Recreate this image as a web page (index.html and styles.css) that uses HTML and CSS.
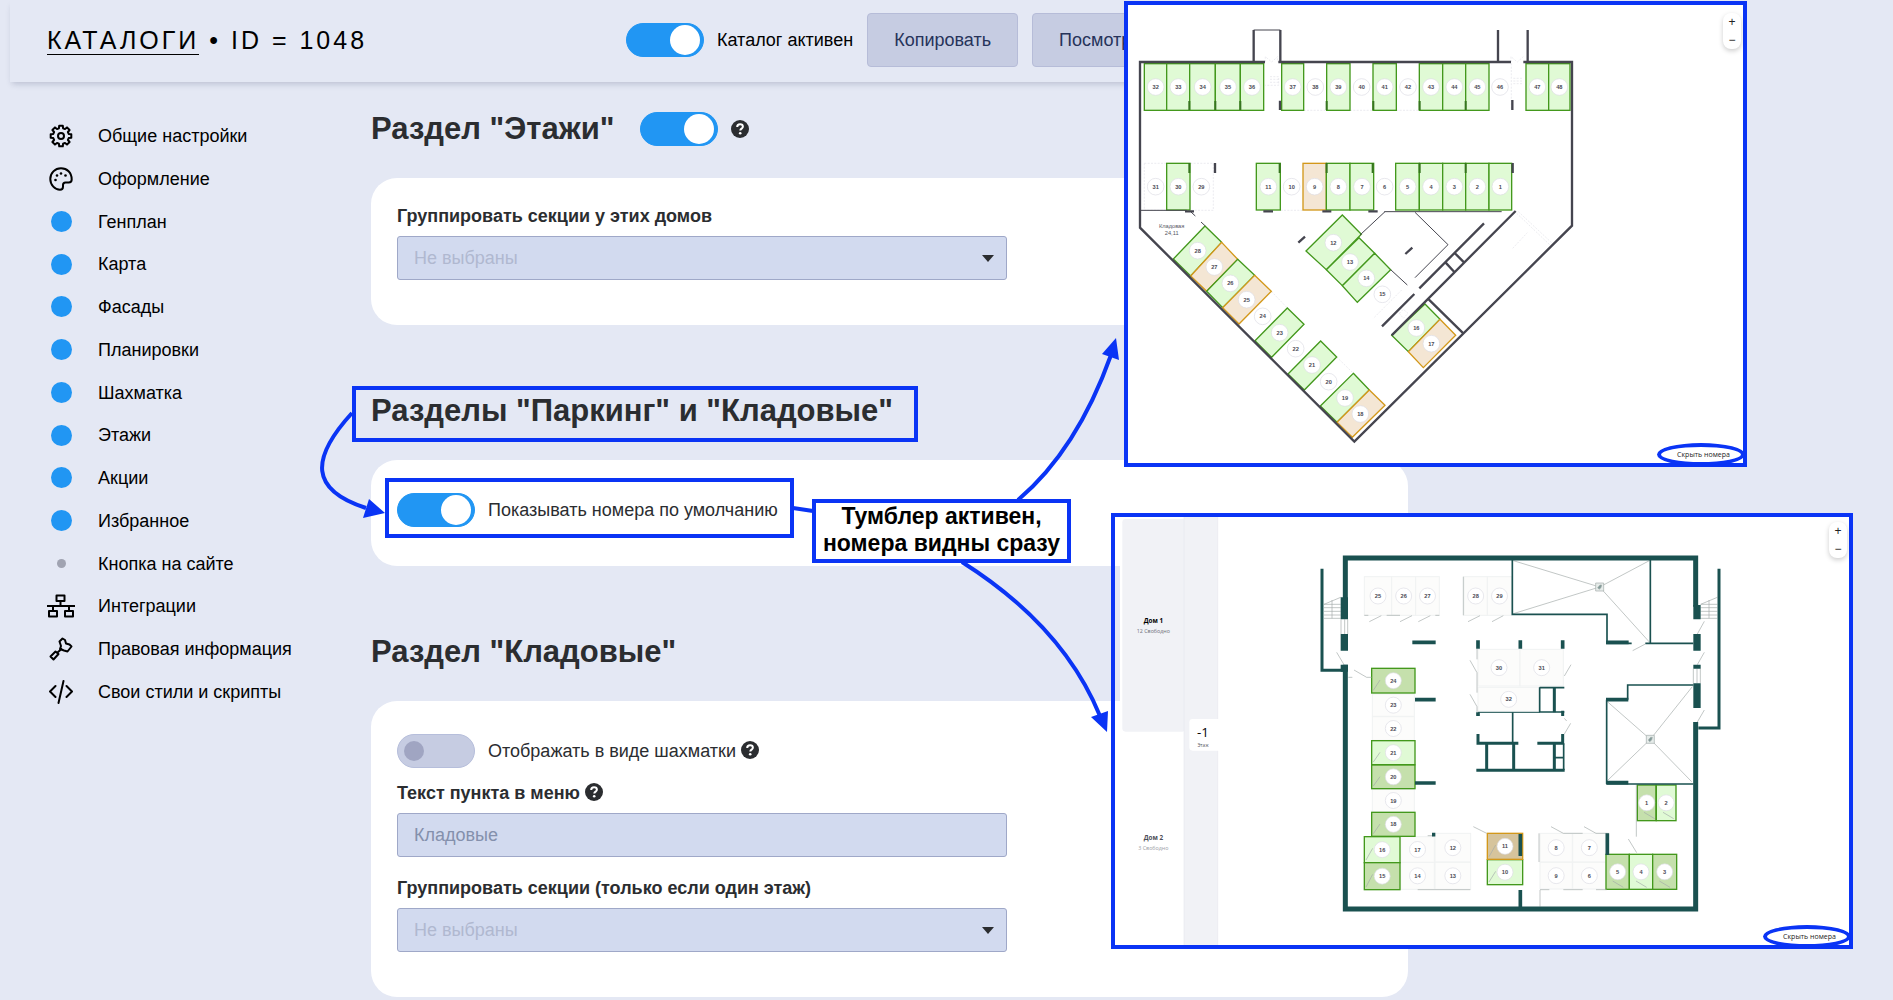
FILE: index.html
```html
<!DOCTYPE html>
<html lang="ru">
<head>
  <meta charset="UTF-8">
  <meta name="viewport" content="width=device-width, initial-scale=1.0">
  <title>Каталоги • ID = 1048</title>
  <link rel="stylesheet" href="styles.css">
</head>
<body>

  <svg class="sprite" aria-hidden="true">
    <symbol id="help" viewBox="0 0 18 18">
      <circle cx="9" cy="9" r="9" fill="#2b2d30"/>
      <path d="M6.2 7c0-3.6 5.7-3.4 5.7-.2 0 1.8-2.6 1.9-2.6 3.7" fill="none" stroke="#fff" stroke-width="2"/>
      <circle cx="9.2" cy="13.3" r="1.3" fill="#fff"/>
    </symbol>
  </svg>

  <header class="topbar">
    <div class="brand"><a href="#">КАТАЛОГИ</a> • ID = 1048</div>
    <div class="actions">
      <label class="switch-row"><input type="checkbox" class="switch" checked> Каталог активен</label>
      <button class="btn">Копировать</button>
      <button class="btn">Посмотреть</button>
    </div>
  </header>

  <div class="layout">
    <nav class="sidebar">
      <a href="#"><span class="icon"><svg viewBox="0 0 24 24"><path d="M9.9 4.3 10.2 1.7H13.8L14.1 4.3 16 5.1 18 3.4 20.6 6 18.9 8 19.7 9.9 22.3 10.2V13.8L19.7 14.1 18.9 16 20.6 18 18 20.6 16 18.9 14.1 19.7 13.8 22.3H10.2L9.9 19.7 8 18.9 6 20.6 3.4 18 5.1 16 4.3 14.1 1.7 13.8V10.2L4.3 9.9 5.1 8 3.4 6 6 3.4 8 5.1Z"/><circle cx="12" cy="12" r="3"/></svg></span>Общие настройки</a>
      <a href="#"><span class="icon"><svg viewBox="0 0 24 24"><path d="M12 1.3C6 1.3 1.3 6 1.3 12c0 6 4.7 10.7 9.7 10.7 2 0 3-1.2 3-3v-1.7c0-1.5 1-2.5 2.5-2.5h3.2c2 0 3-1.2 3-3C22.7 5.5 18 1.3 12 1.3z"/><g class="dots"><circle cx="6.5" cy="13" r="1.3"/><circle cx="8" cy="8.5" r="1.3"/><circle cx="12" cy="6.5" r="1.3"/><circle cx="16.5" cy="8.5" r="1.3"/></g></svg></span>Оформление</a>
      <a href="#"><span class="icon"><i class="dot"></i></span>Генплан</a>
      <a href="#"><span class="icon"><i class="dot"></i></span>Карта</a>
      <a href="#"><span class="icon"><i class="dot"></i></span>Фасады</a>
      <a href="#"><span class="icon"><i class="dot"></i></span>Планировки</a>
      <a href="#"><span class="icon"><i class="dot"></i></span>Шахматка</a>
      <a href="#"><span class="icon"><i class="dot"></i></span>Этажи</a>
      <a href="#"><span class="icon"><i class="dot"></i></span>Акции</a>
      <a href="#"><span class="icon"><i class="dot"></i></span>Избранное</a>
      <a href="#"><span class="icon"><i class="dot off"></i></span>Кнопка на сайте</a>
      <a href="#"><span class="icon wide"><svg viewBox="0 0 28 24"><path d="M9.5 1.5h8v5.5h-8zM2 17h8v5.5H2zM18 17h8v5.5h-8zM13.5 7v5M0 12h28M6 12v5M22 12v5"/></svg></span>Интеграции</a>
      <a href="#"><span class="icon"><svg viewBox="0 0 24 24"><path d="M13.5 1.5 10.5 4.500 12 9 11 12 15 13.500 18.500 14.500 22.500 9.500 20.500 7.500 17 6.500 16 3ZM12.500 12 8.500 15.500M6.500 14.500 9.500 17 4.500 22.500 1.500 19.500Z"/></svg></span>Правовая информация</a>
      <a href="#"><span class="icon"><svg viewBox="0 0 24 24"><path d="M6.5 6 1 11.5 6.5 17M17.5 6 23 11.5 17.5 17M14.5 1 9.5 23"/></svg></span>Свои стили и скрипты</a>
    </nav>

    <main>
      <section>
        <div class="title">
          <h2>Раздел "Этажи"</h2>
          <input type="checkbox" class="switch" aria-label="Раздел Этажи" checked>
          <svg class="help"><use href="#help"/></svg>
        </div>
        <div class="card">
          <div class="field">
            <label for="floorGroup">Группировать секции у этих домов</label>
            <div class="select"><select id="floorGroup"><option>Не выбраны</option></select></div>
          </div>
        </div>
      </section>

      <section>
        <div class="title"><h2>Разделы "Паркинг" и "Кладовые"</h2></div>
        <div class="card">
          <label class="switch-row"><input type="checkbox" class="switch" checked> Показывать номера по умолчанию</label>
        </div>
      </section>

      <section>
        <div class="title"><h2>Раздел "Кладовые"</h2></div>
        <div class="card">
          <label class="switch-row"><input type="checkbox" class="switch"> <span>Отображать в виде шахматки <svg class="help"><use href="#help"/></svg></span></label>
          <div class="field">
            <label for="menuText">Текст пункта в меню <svg class="help"><use href="#help"/></svg></label>
            <input type="text" id="menuText" placeholder="Кладовые">
          </div>
          <div class="field">
            <label for="storeGroup">Группировать секции (только если один этаж)</label>
            <div class="select"><select id="storeGroup"><option>Не выбраны</option></select></div>
          </div>
        </div>
      </section>
    </main>
  </div>

  <!-- план паркинга -->
  <figure class="shot parking">
    <svg class="plan" viewBox="24 15 1845 1374">
      <rect x="24" y="15" width="1845" height="1374" fill="#fff"/>
      <g class="faint">
        <path d="M73 490H140V631H73ZM211 490H280V631H211M551 331H620M690 331H759M829 331H898M482 631H548M454 874 502 924M650 1071 700 1120M845 870 760 955M1190 640 1290 735M1195 635 1297 730M1178 745 1222 698M436 186V170L455 186 473 170V186M450 230H476V256H436M450 238H476M450 247H476M1173 186V170L1192 186 1210 170M1174 190V330M1180 235H1207M1180 243H1207M1180 251H1207M838 940 850 928 864 940 850 955Z"/>
      </g>
      <g id="parkingSpots"></g>
      <g class="wall">
        <path class="w7" d="M435 186H60V683L703 1325 1356 677V186H1210M475 186H1173M401 186V90M481 186V90M1134 90V186M1223 90V186"/>
        <path class="w7" d="M1092 670 898 865M1187 633 815 1006M883 882 786 979M1004 759 1032 787M977 788 1003 816M926 898 1030 1000M535 728 555 710M856 762 877 743"/>
        <path class="w7" d="M480 302V330M1177 300V330M285 489V519M1178 489V519M195 634H222M430 634H459M607 634H634M745 634H773"/>
        <path class="w3" d="M401 90H481M60 631H200M793 635H1145M720 705 795 635M885 637 984 734 885 833M812 809 862 855M213 636 226 648M243 666 256 678"/>
        <path class="col" d="M208 303V330M286 303V330M361 303V330M620 303V330M760 303V330M899 303V330M1037 303V330M208 489V519M479 489V519M620 489V519M758 489V519M899 489V519M1037 489V519"/>
      </g>
      <text class="room" x="155" y="684">Кладовая</text>
      <text class="room" x="155" y="705">24,11</text>
    </svg>
    <div class="zoom"><button aria-label="Приблизить">+</button><button aria-label="Отдалить">−</button></div>
    <button class="hide">Скрыть номера</button>
  </figure>

  <!-- план кладовых -->
  <figure class="shot storage">
    <svg class="plan" viewBox="45 21 2202 1284">
      <rect x="60" y="21" width="2187" height="1284" fill="#fff"/>
      <rect x="67" y="27" width="190" height="638" rx="10" fill="#f1f2f6"/>
      <rect x="252" y="21" width="101" height="1284" fill="#f1f2f6"/>
      <path d="M252 21V1305M353 21V1305" stroke="#e7e8ee" stroke-width="2"/>
      <rect x="268" y="627" width="100" height="95" rx="10" fill="#fff"/>
      <g class="house">
        <text x="160" y="338" font-size="19" font-weight="bold">Дом 1</text>
        <text x="160" y="368" font-size="16" fill="#6d6f78">12 Свободно</text>
        <text x="160" y="991" font-size="19" font-weight="bold" fill="#4a4c55">Дом 2</text>
        <text x="160" y="1021" font-size="16" fill="#9a9ca5">3 Свободно</text>
        <text x="309" y="680" font-size="40">-1</text>
        <text x="309" y="710" font-size="14" fill="#55575f">Этаж</text>
      </g>
      <g id="storageCells"></g>
      <!-- двери, лестницы, окна -->
      <path class="thin" d="M808 335 844 317M900 335 936 317M955 335 991 317M1104 335 1140 317M1176 335 1210 317M793 316H805M860 316H900M1006 316H1018M710 427 732 464M762 480 800 502H815M745 502H757M1110 451 1131 488V548M1131 416V448M1110 553 1131 590V607M1393 498 1413 464M1393 625 1400 633M1393 672 1412 640M1120 950 1160 970M1353 950 1390 970H1448M1452 950 1488 970H1526M1585 987 1610 1028M1598 422 1636 402M1792 372 1813 334M1792 464 1813 427M1792 636 1813 600M953 1139H1111M1320 1139H1348M1390 1139H1448M1488 1139H1520M1090 200V316M1317 970V1056M1320 1140V1190M1609 825V980M983 977H997M1240 152 1499 231 1240 311M1648 152 1499 231 1648 396M1522 575 1651 688 1777 530M1522 812 1651 688 1775 815"/>
      <path class="thin" d="M672 283 722 262M672 283H722M672 293H722M672 304H722M672 315H722M672 325H722M696 270V325M1802 283 1852 262M1802 283H1852M1802 293H1852M1802 304H1852M1802 315H1852M1802 325H1852M1827 270V325M723 328V372M734 328V372M743 328V372M1780 476V520M1791 476V520M1801 476V520"/>
      <g class="thin"><path d="M1487 219H1511V243H1487ZM1639 676H1663V700H1639Z"/><path d="M1493 233 1500 225H1505L1503 233 1497 238ZM1645 690 1652 682H1657L1655 690 1649 695Z" fill="#7f9a98"/></g>
      <g class="teal">
        <path class="w15" d="M736 270V144H1787V290M736 464V1197H1787V636"/>
        <path class="w22" d="M733 262V328M733 372V422M733 464V485M1791 285V328M1791 372V422M1791 464V476M1791 520V594"/>
        <path class="w9" d="M666 176V481H730M1857 176V654H1795"/>
        <path class="w11" d="M937 397H1007M945 569H1007M945 819H1007M1134 391V416M1261 391V416M1388 391V416M1261 1140V1195M1261 972V1038M1522 970V1035M996 974H1006M1518 569H1585M1518 818H1585M1518 397H1586M1134 607V618"/>
        <path class="w9" d="M1363 533V607M1388 602V618M1134 672V700H1255M1312 700H1388V672M1129 781H1394M1160 700V780M1241 700V780M1363 700V780"/>
        <path class="w5" d="M1237 150V313H1521V400H1595M1636 400H1780M1651 150V400M1520 822V569M1583 569V525H1780M1520 822H1780M1319 532V607M1319 533H1393M1319 606H1393M1238 607V700M1391 700V780M1363 743H1391"/>
        <path class="w3" d="M1134 607H1320"/>
      </g>
      <g id="storageLabels"></g>
    </svg>
    <div class="zoom"><button aria-label="Приблизить">+</button><button aria-label="Отдалить">−</button></div>
    <button class="hide">Скрыть номера</button>
  </figure>

  <!-- рамки и стрелки -->
  <svg class="arrows" width="1200" height="800" aria-hidden="true">
    <g fill="none" stroke="#0a34f5" stroke-width="4">
      <rect x="354" y="388" width="562" height="52"/>
      <rect x="387" y="480" width="405" height="56"/>
      <path d="M352 413C310 459 310 490 366 508M793 508 813 511M1018 500Q1077 450 1111 355M962 562C1030 605 1075 655 1100 716"/>
    </g>
    <path fill="#0a34f5" d="M369 499 363 518 385 513ZM1102 354 1119 360 1116 338ZM1091 717 1108 711 1107 732Z"/>
  </svg>
  <div class="note">Тумблер активен,<br>номера видны сразу</div>

  <script>
    // [номер, x1, x2, статус] - ряды паркинга
    const topRow = [
      [32, 73, 140, 'free'], [33, 140, 209, 'free'], [34, 209, 286, 'free'], [35, 286, 361, 'free'], [36, 361, 431, 'free'],
      [37, 485, 551, 'free'], [38, 551, 620], [39, 620, 690, 'free'], [40, 690, 759], [41, 759, 829, 'free'], [42, 829, 898],
      [43, 898, 968, 'free'], [44, 968, 1037, 'free'], [45, 1037, 1107, 'free'], [46, 1107, 1173], [47, 1218, 1286, 'free'], [48, 1286, 1350, 'free']
    ];
    const midRow = [
      [31, 73, 140], [30, 140, 210, 'free'], [29, 210, 278], [11, 409, 481, 'free'], [10, 481, 549], [9, 549, 619, 'booked'],
      [8, 619, 690, 'free'], [7, 690, 761, 'free'], [6, 761, 827], [5, 827, 898, 'free'], [4, 898, 968, 'free'],
      [3, 968, 1037, 'free'], [2, 1037, 1107, 'free'], [1, 1107, 1175, 'free']
    ];
    // [номер, cx, cy, точки, статус] - наклонные места
    const diagonal = [
      [28, 233, 752, '255,678 305,727 212,828 160,777', 'free'],
      [27, 283, 801, '305,727 353,778 260,874 212,828', 'booked'],
      [26, 331, 850, '353,778 404,826 308,923 260,874', 'free'],
      [25, 380, 899, '404,826 454,874 357,972 308,923', 'booked'],
      [24, 428, 949],
      [23, 479, 998, '502,924 552,973 455,1072 405,1022', 'free'],
      [22, 527, 1046],
      [21, 576, 1095, '602,1023 650,1071 553,1170 504,1122', 'free'],
      [20, 626, 1145],
      [19, 675, 1194, '700,1120 748,1170 651,1267 601,1218', 'free'],
      [18, 721, 1242, '748,1170 795,1216 697,1312 651,1267', 'booked'],
      [12, 640, 728, '667,645 724,703 619,809 558,753', 'free'],
      [13, 690, 786, '717,713 764,760 667,857 619,809', 'free'],
      [14, 739, 835, '764,760 812,809 712,907 667,857', 'free'],
      [15, 787, 883],
      [16, 889, 984, '915,912 960,958 865,1055 815,1006', 'free'],
      [17, 934, 1031, '960,958 1007,1006 910,1103 865,1055', 'booked']
    ];
    // [номер, x, y, ширина, высота, статус] - кладовые
    const cells = [
      [25, 793, 200, 82, 116], [26, 875, 200, 72, 116], [27, 947, 200, 71, 116], [28, 1092, 200, 70, 116], [29, 1162, 200, 73, 116],
      [30, 1134, 418, 126, 110], [31, 1260, 418, 130, 110], [32, 1134, 532, 184, 72],
      [23, 817, 552, 126, 67], [22, 817, 620, 126, 71], [19, 817, 837, 126, 69],
      [17, 902, 980, 101, 77], [12, 1005, 970, 107, 86], [14, 902, 1057, 101, 81], [13, 1005, 1057, 107, 81],
      [8, 1320, 970, 97, 86], [7, 1418, 970, 100, 86], [9, 1320, 1057, 97, 80], [6, 1418, 1057, 100, 80],
      [24, 815, 475, 130, 74, 'free dark'], [21, 815, 692, 130, 72, 'free'], [20, 815, 765, 130, 71, 'free dark'], [18, 815, 907, 130, 72, 'free dark'],
      [16, 793, 980, 107, 78, 'free'], [15, 793, 1058, 107, 81, 'free dark'],
      [10, 1162, 1049, 106, 75, 'free'], [11, 1162, 970, 106, 78, 'booked dark'],
      [1, 1612, 825, 56, 107, 'free dark'], [2, 1669, 825, 59, 107, 'free'],
      [5, 1518, 1033, 70, 105, 'free dark'], [4, 1588, 1033, 70, 105, 'free'], [3, 1658, 1033, 72, 105, 'free dark']
    ];

    function label(n, x, y, r) {
      return `<circle class="badge" cx="${x}" cy="${y}" r="${r}"/><text class="num" x="${x}" y="${y + 6}">${n}</text>`;
    }

    function renderRow(row, y, h) {
      return row.map(([n, x1, x2, status]) =>
        (status ? `<rect class="${status}" x="${x1}" y="${y}" width="${x2 - x1}" height="${h}"/>` : '') +
        label(n, Math.round((x1 + x2) / 2), y + 70, 25)
      ).join('');
    }

    document.getElementById('parkingSpots').innerHTML =
      renderRow(topRow, 191, 140) +
      renderRow(midRow, 490, 140) +
      diagonal.map(([n, x, y, points, status]) =>
        (points ? `<polygon class="${status}" points="${points}"/>` : '') + label(n, x, y, 25)
      ).join('');

    document.getElementById('storageCells').innerHTML = cells.map(([n, x, y, w, h, status]) =>
      `<rect class="${status || 'sold'}" x="${x}" y="${y}" width="${w}" height="${h}"/>` +
      (status ? (w > h
        ? `<path class="thin" d="M${x + 5} ${y + h - 8}L${x + 25} ${y + 35}"/>`
        : `<path class="thin" d="M${x + 20} ${y + h - 25}L${x + 52} ${y + h - 6}"/>`) : '')
    ).join('');

    document.getElementById('storageLabels').innerHTML = cells.map(([n, x, y, w, h]) =>
      label(n, x + w / 2, y + h / 2, 24)
    ).join('');
  </script>
</body>
</html>
```
FILE: styles.css
```css
* {
  box-sizing: border-box;
}
body {
  margin: 0;
  position: relative;
  min-height: 100vh;
  overflow-x: hidden;
  background-color: #e4e8f4;
  color: #2b2d30;
  font-family: "Liberation Sans", Arial, sans-serif;
  font-size: 18px;
  line-height: 22px;
}
.sprite {
  display: none;
}

/* шапка */
.topbar {
  display: grid;
  grid-template-columns: 579px 1fr;
  align-items: center;
  height: 82px;
  max-width: 1420px;
  margin: 0 10px;
  padding: 0 37px 3px;
  box-shadow: 0 4px 6px -2px rgba(40, 50, 90, 0.22);
  color: #000;
}
.brand {
  font-size: 25px;
  letter-spacing: 3px;
  line-height: 28px;
}
.brand a {
  color: #000;
  text-decoration: none;
  border-bottom: 1px solid #000;
}
.actions {
  display: flex;
  align-items: center;
  gap: 14px;
}
.btn {
  height: 54px;
  padding: 0 26px;
  background-color: #c6cce2;
  border: 1px solid #b6bcd8;
  border-radius: 4px;
  color: #26335a;
  font: inherit;
  cursor: pointer;
}

/* переключатель */
.switch {
  appearance: none;
  flex: none;
  width: 78px;
  height: 34px;
  margin: 0;
  padding: 6px;
  background-color: #c6cce2;
  border: 1px solid #b6bedb;
  border-radius: 17px;
  cursor: pointer;
}
.switch::before {
  content: "";
  display: block;
  width: 20px;
  height: 20px;
  border-radius: 50%;
  background-color: #a0a5c2;
}
.switch:checked {
  padding: 1px 3px;
  background-color: #2196f3;
  border-color: #2196f3;
}
.switch:checked::before {
  width: 30px;
  height: 30px;
  margin-left: auto;
  background-color: #fff;
}
.switch-row {
  display: flex;
  align-items: center;
  gap: 13px;
}
.help {
  width: 18px;
  height: 18px;
  vertical-align: -2px;
}

.layout {
  display: flex;
}

/* меню */
.sidebar {
  flex: none;
  width: 371px;
  padding: 32px 0 0 47px;
}
.sidebar a {
  display: flex;
  align-items: center;
  gap: 23px;
  height: 43px;
  color: #000;
  text-decoration: none;
}
.sidebar a:nth-child(4n) {
  height: 42px;
}
.icon {
  display: flex;
  justify-content: center;
  width: 28px;
}
.icon svg {
  width: 24px;
  height: 24px;
  fill: none;
  stroke: #000;
  stroke-width: 2;
  stroke-linejoin: round;
  stroke-linecap: round;
}
.icon.wide svg {
  width: 28px;
}
.icon .dots {
  fill: #000;
  stroke: none;
}
.dot {
  width: 21px;
  height: 21px;
  border-radius: 50%;
  background-color: #2196f3;
}
.dot.off {
  width: 9px;
  height: 9px;
  background-color: #a0a3b1;
}

/* настройки */
main {
  flex: 1;
  max-width: 1037px;
  padding: 28px 0 3px;
}
section + section {
  margin-top: 67px;
}
.title {
  display: flex;
  align-items: center;
  height: 38px;
  margin-bottom: 30px;
}
.title .switch {
  margin: 0 13px 0 26px;
}
h2 {
  margin: 0;
  font-size: 31px;
  line-height: 38px;
}
.card {
  padding: 20px 26px 32px;
  background-color: #fff;
  border-radius: 26px;
}
.card .switch-row {
  padding: 13px 0 7px;
}
.field {
  padding: 7px 0 13px;
}
.field label {
  display: block;
  margin-bottom: 9px;
  font-weight: bold;
}
.field input,
.select {
  width: 610px;
  max-width: 100%;
}
.field input,
.field select {
  display: block;
  height: 44px;
  padding: 0 16px;
  background-color: #d2daef;
  border: 1px solid #9fa8c8;
  border-radius: 3px;
  font: inherit;
}
.field input::placeholder {
  color: #8490ac;
}
.select {
  position: relative;
}
.field select {
  appearance: none;
  width: 100%;
  color: #b0b8d0;
}
.select::after {
  content: "";
  position: absolute;
  top: 19px;
  right: 13px;
  border: 6px solid transparent;
  border-top: 7px solid #2b2d30;
  border-bottom: 0;
}

/* планы поверх страницы */
.shot {
  position: absolute;
  margin: 0;
  border: 4px solid #0a34f5;
}
.parking {
  left: 1124px;
  top: 1px;
  width: 623px;
  height: 466px;
}
.storage {
  left: 1111px;
  top: 513px;
  width: 742px;
  height: 436px;
}
.plan {
  display: block;
  width: 100%;
  height: 100%;
  font-family: "Liberation Sans", Arial, sans-serif;
}
.zoom {
  position: absolute;
  top: 8px;
  right: 2px;
  display: flex;
  flex-direction: column;
  width: 18px;
  height: 36px;
  background-color: #fff;
  border-radius: 8px;
  box-shadow: 0 2px 5px rgba(0, 0, 0, 0.2);
}
.storage .zoom {
  top: 5px;
}
.zoom button {
  flex: 1;
  padding: 0;
  background: none;
  border: 0;
  color: #222;
  font: 12px/18px "Liberation Sans", Arial, sans-serif;
}
.hide {
  position: absolute;
  right: -2px;
  bottom: -3px;
  width: 88px;
  height: 23px;
  padding: 0 0 0 5px;
  background: none;
  border: 4px solid #0a34f5;
  border-radius: 50%;
  color: #222;
  font: 7px/12px "Open Sans", sans-serif;
}

.plan text {
  text-anchor: middle;
}
.plan .num {
  font-size: 17px;
  font-weight: bold;
  fill: #4a4a55;
}
.plan .room {
  font-size: 17px;
  fill: #55555f;
}
.house {
  font-family: "Open Sans", sans-serif;
}
.badge {
  fill: #fff;
  stroke: #dcdce4;
  stroke-width: 2;
}
.free {
  fill: #e0fad5;
  stroke: #43981c;
  stroke-width: 4;
}
.booked {
  fill: #f4e6d4;
  stroke: #d3981a;
  stroke-width: 4;
}
.free.dark {
  fill: #c5e0ac;
}
.booked.dark {
  fill: #d6c49c;
}
.sold {
  fill: #fcfcfb;
  stroke: #f0f2f2;
  stroke-width: 3;
}
.faint {
  fill: none;
  stroke: #e2e2e8;
  stroke-width: 2;
  stroke-dasharray: 6 4;
}
.thin {
  fill: none;
  stroke: #a3aaa9;
  stroke-width: 2;
}
g.thin {
  fill: #e6ecea;
}
.wall {
  fill: none;
  stroke: #45454f;
}
.wall .col {
  stroke: #36751f;
  stroke-width: 6;
}
.teal {
  fill: none;
  stroke: #1a5150;
}
.w3 { stroke-width: 3; }
.w5 { stroke-width: 5; }
.w7 { stroke-width: 7; }
.w9 { stroke-width: 9; }
.w11 { stroke-width: 11; }
.w15 { stroke-width: 15; }
.w22 { stroke-width: 22; }

.arrows {
  position: absolute;
  left: 0;
  top: 0;
  pointer-events: none;
}
.note {
  position: absolute;
  left: 812px;
  top: 499px;
  width: 259px;
  height: 64px;
  background-color: #fff;
  border: 4px solid #0a34f5;
  color: #000;
  font-size: 23px;
  font-weight: bold;
  line-height: 27px;
  text-align: center;
  white-space: nowrap;
}
```
